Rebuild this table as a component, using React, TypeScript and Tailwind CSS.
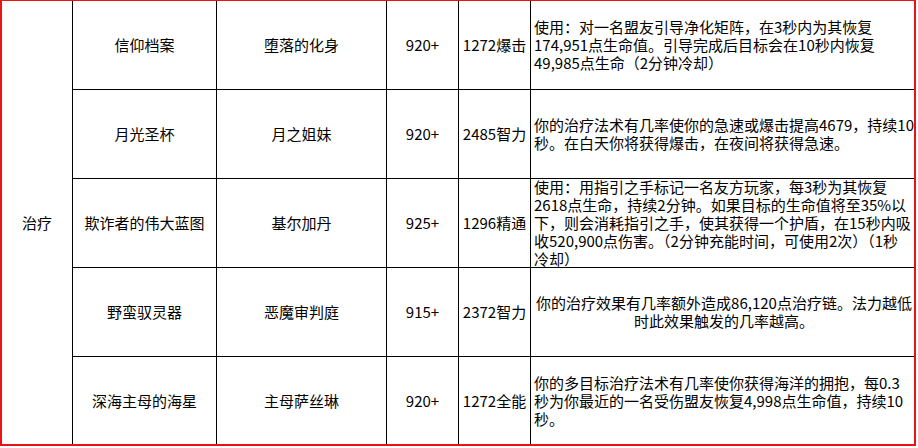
import React from 'react';

interface Row {
  name: string;
  boss: string;
  ilvl: string;
  stat: string;
  desc: string[];
  center?: boolean;
}

const ROWS: Row[] = [
  {
    name: '信仰档案',
    boss: '堕落的化身',
    ilvl: '920+',
    stat: '1272爆击',
    desc: [
      '使用：对一名盟友引导净化矩阵，在3秒内为其恢复',
      '174,951点生命值。引导完成后目标会在10秒内恢复',
      '49,985点生命（2分钟冷却）',
    ],
  },
  {
    name: '月光圣杯',
    boss: '月之姐妹',
    ilvl: '920+',
    stat: '2485智力',
    desc: [
      '你的治疗法术有几率使你的急速或爆击提高4679，持续10',
      '秒。在白天你将获得爆击，在夜间将获得急速。',
    ],
  },
  {
    name: '欺诈者的伟大蓝图',
    boss: '基尔加丹',
    ilvl: '925+',
    stat: '1296精通',
    desc: [
      '使用：用指引之手标记一名友方玩家，每3秒为其恢复',
      '2618点生命，持续2分钟。如果目标的生命值将至35%以',
      '下，则会消耗指引之手，使其获得一个护盾，在15秒内吸',
      '收520,900点伤害。（2分钟充能时间，可使用2次）（1秒',
      '冷却）',
    ],
  },
  {
    name: '野蛮驭灵器',
    boss: '恶魔审判庭',
    ilvl: '915+',
    stat: '2372智力',
    desc: [
      '你的治疗效果有几率额外造成86,120点治疗链。法力越低',
      '时此效果触发的几率越高。',
    ],
    center: true,
  },
  {
    name: '深海主母的海星',
    boss: '主母萨丝琳',
    ilvl: '920+',
    stat: '1272全能',
    desc: [
      '你的多目标治疗法术有几率使你获得海洋的拥抱，每0.3',
      '秒为你最近的一名受伤盟友恢复4,998点生命值，持续10',
      '秒。',
    ],
  },
];

export default function App() {
  return (
    <div className="h-[448px] w-[918px] bg-white text-black">
      <div
        className="w-[916px] border-2 border-t border-[#ee1111] text-[15px] leading-[18px]"
        style={{ fontFamily: '"Noto Sans CJK SC", "Liberation Sans", sans-serif' }}
      >
        <div className="grid grid-cols-[71px_144px_170px_72px_72px_383px] grid-rows-[89px_89px_89px_89px_87px]">
          <div className="row-span-5 flex items-center justify-center border-r border-black">
            治疗
          </div>
          {ROWS.map((r, i) => {
            const last = i === ROWS.length - 1;
            const cell = `flex items-center justify-center border-black ${last ? '' : 'border-b'}`;
            return (
              <React.Fragment key={r.name}>
                <div className={`${cell} border-r`}>{r.name}</div>
                <div className={`${cell} border-r`}>{r.boss}</div>
                <div className={`${cell} border-r`}>{r.ilvl}</div>
                <div className={`${cell} border-r whitespace-nowrap`}>{r.stat}</div>
                <div
                  className={`flex items-center border-black pl-[3px] ${last ? '' : 'border-b'} ${
                    r.center ? 'justify-center' : 'justify-start'
                  }`}
                >
                  <p className={`whitespace-nowrap ${r.center ? 'text-center' : 'text-left'}`}>
                    {r.desc.map((line, j) => (
                      <React.Fragment key={j}>
                        {j > 0 && <br />}
                        {line}
                      </React.Fragment>
                    ))}
                  </p>
                </div>
              </React.Fragment>
            );
          })}
        </div>
      </div>
    </div>
  );
}
